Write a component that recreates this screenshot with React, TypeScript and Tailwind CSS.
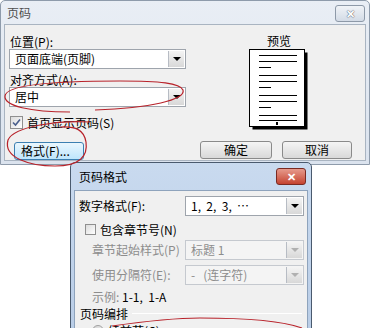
import React from "react";

const F = { fontFamily: '"Noto Sans CJK SC", "Noto Sans", sans-serif' };

function DropBtn({ disabled }: { disabled?: boolean }) {
  return (
    <div className="flex h-full w-[16px] items-center justify-center border-l border-[#b7bcc4] bg-gradient-to-b from-[#f4f4f4] to-[#d8d8d8]">
      <div
        className={
          "h-0 w-0 border-x-[4px] border-t-[4px] border-x-transparent " +
          (disabled ? "border-t-[#b0b0b0]" : "border-t-black")
        }
      />
    </div>
  );
}

function Select({
  text,
  w,
  disabled,
}: {
  text: string;
  w: string;
  disabled?: boolean;
}) {
  return (
    <div
      className={
        "flex h-[20px] items-stretch border p-[1px] " +
        w +
        (disabled ? " border-[#c5c9cf] bg-[#f4f4f4]" : " border-[#9ea4ac] bg-white")
      }
    >
      <div
        className={
          "flex flex-1 items-center whitespace-pre pl-[4px] text-[12px] leading-none " +
          (disabled ? "text-[#8d8d8d]" : "text-black")
        }
      >
        {text}
      </div>
      <DropBtn disabled={disabled} />
    </div>
  );
}

function PreviewPage() {
  const lines: [number, boolean][] = [
    [6, true],
    [12, true],
    [18, false],
    [26, true],
    [32, true],
    [38, false],
    [46, true],
    [52, true],
    [58, false],
    [66, true],
    [71, true],
  ];
  return (
    <svg width="60" height="82" viewBox="0 0 60 82">
      <rect x="3.5" y="3.5" width="55" height="77" fill="black" />
      <rect x="0.5" y="0.5" width="55" height="77" fill="white" stroke="black" />
      {lines.map(([y, long], i) => (
        <line
          key={i}
          x1="10"
          x2={long ? 48 : 22}
          y1={y + 0.5}
          y2={y + 0.5}
          stroke="black"
          strokeWidth="1"
        />
      ))}
      <rect x="27" y="73" width="2" height="3" fill="black" />
    </svg>
  );
}

export default function App() {
  return (
    <div className="relative h-[328px] w-[372px] overflow-hidden bg-white" style={F}>
      {/* Top dialog: 页码 */}
      <div className="absolute left-0 top-0 flex h-[165px] w-[370px] flex-col rounded-t-[5px] border border-[#8e9bab] bg-gradient-to-b from-[#e9eef5] to-[#dbe3ee] px-[3px] pb-[3px]">
        <div className="flex h-[23px] items-center justify-between pl-[3px]">
          <span className="text-[12px] text-[#4f4f4f]">页码</span>
          <div className="mr-[1px] mt-[2px] flex h-[17px] w-[30px] items-center justify-center rounded-[3px] border border-[#8d99a8] bg-gradient-to-b from-[#f0f3f7] to-[#d3dbe6] text-[11px] font-bold text-white [text-shadow:0_0_1px_#556,0_0_1px_#556]">
            ✕
          </div>
        </div>
        <div className="flex flex-1 border border-[#a9b4c1] bg-[#f0f0f0] pl-[4px] pr-[4px] pt-[9px]">
          <div className="flex w-[180px] flex-col">
            <div className="h-[15px] pl-[1px] text-[12px] leading-[15px] text-black">位置(P):</div>
            <Select text="页面底端(页脚)" w="w-[177px]" />
            <div className="mt-[3px] h-[15px] pl-[1px] text-[12px] leading-[15px] text-black">对齐方式(A):</div>
            <Select text="居中" w="w-[177px]" />
            <div className="mt-[8px] flex items-center gap-[4px] pl-[1px]">
              <div className="flex h-[13px] w-[13px] items-center justify-center border border-[#8f8f8f] bg-gradient-to-br from-[#dcdcdc] to-white">
                <svg width="9" height="9" viewBox="0 0 9 9">
                  <path d="M1 4.5 L3.5 7 L8 1.5" fill="none" stroke="#4a5f8c" strokeWidth="1.6" />
                </svg>
              </div>
              <span className="text-[12px] leading-[15px] text-black">首页显示页码(S)</span>
            </div>
            <div className="ml-[5px] mt-[12px] flex h-[18px] w-[70px] items-center rounded-[3px] border border-[#3c7fb1] bg-gradient-to-b from-[#eaf6fd] to-[#bee6fd] pl-[6px] text-[12px] leading-none text-black">
              格式(F)...
            </div>
          </div>
          <div className="flex flex-1 flex-col items-center">
            <div className="ml-[8px] h-[14px] text-[12px] leading-[14px] text-black">预览</div>
            <div className="ml-[8px] mt-[1px]">
              <PreviewPage />
            </div>
            <div className="ml-[2px] mt-[10px] flex gap-[10px]">
              <div className="flex h-[18px] w-[72px] items-center justify-center rounded-[3px] border border-[#8a8a8a] bg-gradient-to-b from-[#f5f5f5] to-[#d9d9d9] text-[12px] leading-none text-black">
                确定
              </div>
              <div className="flex h-[18px] w-[70px] items-center justify-center rounded-[3px] border border-[#8a8a8a] bg-gradient-to-b from-[#f5f5f5] to-[#d9d9d9] text-[12px] leading-none text-black">
                取消
              </div>
            </div>
          </div>
        </div>
      </div>

      {/* Bottom dialog: 页码格式 */}
      <div className="absolute left-[70px] top-[162px] flex h-[180px] w-[242px] flex-col rounded-t-[5px] border border-[#4a5a6e] bg-gradient-to-b from-[#c9daef] to-[#b8cce6] px-[3px]">
        <div className="flex h-[27px] items-center justify-between pl-[5px]">
          <span className="text-[12px] text-black">页码格式</span>
          <div className="mr-[2px] flex h-[17px] w-[30px] items-center justify-center rounded-[3px] border border-[#7a2a22] bg-gradient-to-b from-[#e69a8c] to-[#c4412f] text-[11px] font-bold text-white">
            ✕
          </div>
        </div>
        <div className="flex flex-1 flex-col border border-[#8ea3bc] bg-[#f0f0f0] pl-[4px] pr-[3px] pt-[5px]">
          <div className="flex items-center justify-between">
            <span className="text-[12px] leading-none text-black">数字格式(F):</span>
            <Select text="1,  2,  3,  ⋯" w="w-[119px]" />
          </div>
          <div className="mt-[6px] flex items-center gap-[4px] pl-[6px]">
            <div className="h-[11px] w-[11px] border border-[#8f8f8f] bg-gradient-to-br from-[#dcdcdc] to-white" />
            <span className="text-[12px] leading-[15px] text-black">包含章节号(N)</span>
          </div>
          <div className="mt-[3px] flex items-center justify-between">
            <span className="pl-[13px] text-[12px] leading-none text-[#8d8d8d]">章节起始样式(P)</span>
            <Select text="标题 1" w="w-[119px]" disabled />
          </div>
          <div className="mt-[5px] flex items-center justify-between">
            <span className="pl-[13px] text-[12px] leading-none text-[#8d8d8d]">使用分隔符(E):</span>
            <Select text="-   (连字符)" w="w-[119px]" disabled />
          </div>
          <div className="mt-[4px] flex items-center pl-[13px] text-[12px] leading-[15px]">
            <span className="text-[#8d8d8d]">示例:&nbsp;</span>
            <span className="whitespace-pre text-black">1-1,  1-A</span>
          </div>
          <div className="mt-[2px] flex items-center gap-[4px] pl-[1px]">
            <span className="text-[12px] leading-[15px] text-black">页码编排</span>
            <div className="mr-[2px] h-px flex-1 border-b border-white bg-[#d5dfe5]" />
          </div>
          <div className="mt-[2px] flex items-center gap-[4px] pl-[13px]">
            <div className="h-[12px] w-[12px] rounded-full border border-[#a0a0a0] bg-gradient-to-br from-[#d0d0d0] to-white" />
            <span className="text-[12px] leading-[15px] text-black">续前节(C)</span>
          </div>
        </div>
      </div>

      {/* Red hand-drawn annotations */}
      <svg className="pointer-events-none absolute left-0 top-0" width="372" height="328" viewBox="0 0 372 328">
        <g fill="none" stroke="#b8222a" strokeWidth="1.2">
          <path d="M70 112 C 30 112, 4 106, 5 96 C 6 84, 60 81, 120 81 C 160 81, 180 83, 183 90 C 186 100, 150 108, 95 110" />
          <path d="M90 122 C 60 120, 14 126, 8 140 C 3 158, 30 166, 55 166 C 80 166, 88 156, 86 142 C 84 130, 76 126, 60 127" />
          <path d="M112 326 C 140 322, 170 318, 200 318 C 240 318, 280 320, 302 328" />
        </g>
      </svg>
    </div>
  );
}
